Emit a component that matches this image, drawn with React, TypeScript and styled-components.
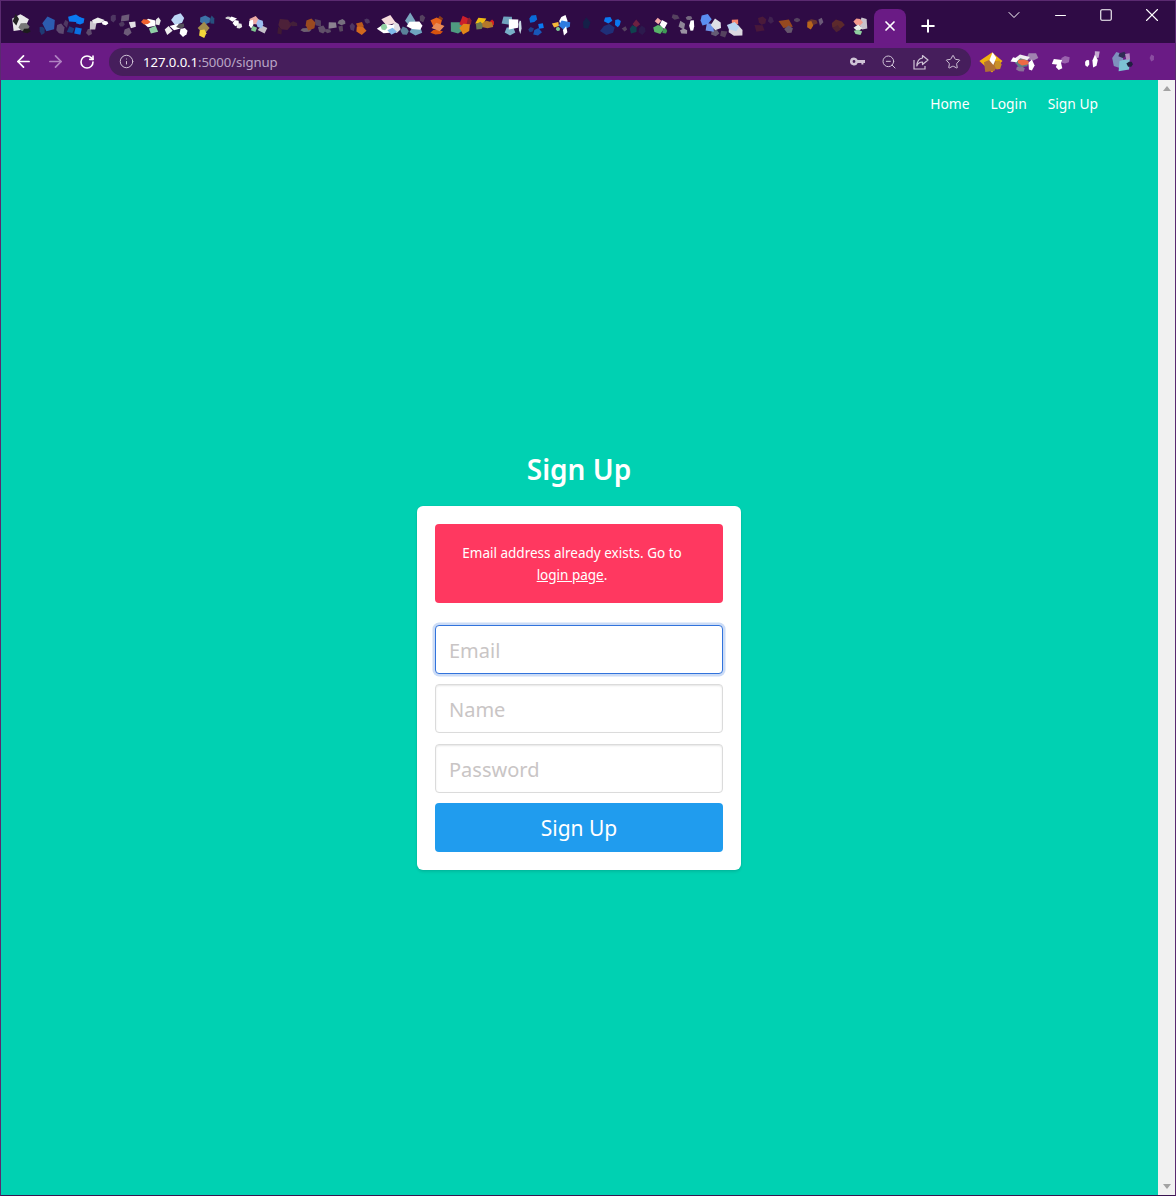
import React from 'react';
import styled, { createGlobalStyle } from 'styled-components';
import { ArrowLeft, ArrowRight, ChevronDown, Info, Minus, Plus, RotateCw, Square, Star, X, ZoomOut } from 'lucide-react';

const GlobalStyle = createGlobalStyle`
  html, body {
    margin: 0;
    padding: 0;
    height: 100%;
    overflow: hidden;
    font-family: "Noto Sans", "Open Sans", sans-serif;
  }
  * { box-sizing: border-box; }
`;

const Frame = styled.div`
  width: 1176px;
  height: 1196px;
  display: flex;
  flex-direction: column;
  border: 1px solid #5a2a70;
  border-bottom-color: #3a1450;
  background: #00d1b2;
`;

const TabStrip = styled.div`
  height: 42px;
  flex: none;
  display: flex;
  align-items: flex-start;
  background: #2f0b45;
`;

const TabBlobs = styled.svg`
  flex: none;
  width: 873px;
  height: 42px;
`;

const ActiveTab = styled.div`
  flex: none;
  width: 32px;
  height: 34px;
  margin-top: 8px;
  display: flex;
  align-items: flex-start;
  justify-content: center;
  padding-top: 9px;
  color: #fff;
  background: #6a1b85;
  border-radius: 8px 8px 0 0;
`;

const NewTab = styled.div`
  flex: none;
  width: 44px;
  height: 34px;
  margin-top: 8px;
  display: flex;
  align-items: flex-start;
  justify-content: center;
  padding-top: 7px;
  color: #fff;
`;

const WindowControls = styled.div`
  margin-left: auto;
  display: flex;
  align-items: center;
  height: 28px;
  color: #fff;
`;

const WindowButton = styled.div`
  width: 46px;
  height: 28px;
  display: flex;
  align-items: center;
  justify-content: center;
`;

const Toolbar = styled.div`
  height: 37px;
  flex: none;
  display: flex;
  align-items: center;
  padding-left: 6px;
  background: #6a1b85;
`;

const NavButton = styled.div<{ $dim?: boolean }>`
  width: 32px;
  height: 28px;
  display: flex;
  align-items: center;
  justify-content: center;
  color: ${(p) => (p.$dim ? '#b083c2' : '#fff')};
`;

const Omnibox = styled.div`
  width: 862px;
  height: 28px;
  margin-left: 6px;
  display: flex;
  align-items: center;
  padding-left: 10px;
  border-radius: 14px;
  background: #461e5c;
  color: #cfc3d6;
`;

const UrlText = styled.div`
  margin-left: 9px;
  font-family: "Noto Sans", sans-serif;
  font-size: 13.2px;
  letter-spacing: -0.1px;
  line-height: 26px;
  color: #b9a5c6;
  white-space: nowrap;
`;

const UrlHost = styled.span`
  color: #fff;
`;

const OmniIcons = styled.div`
  margin-left: auto;
  display: flex;
  align-items: center;
  gap: 16px;
  padding-right: 10px;
`;

const ExtensionBlobs = styled.svg`
  flex: none;
  width: 195px;
  height: 37px;
  margin-left: 5px;
`;

const Viewport = styled.div`
  flex: 1;
  min-height: 0;
  display: flex;
`;

const Page = styled.main`
  flex: 1;
  min-width: 0;
  display: flex;
  flex-direction: column;
  background: #00d1b2;
`;

const TopNav = styled.nav`
  height: 48px;
  flex: none;
  display: flex;
  justify-content: flex-end;
  align-items: center;
  gap: 21px;
  padding: 0 60px 2px 0;
`;

const NavLink = styled.a`
  font-size: 13.8px;
  color: #fff;
`;

const Hero = styled.section`
  flex: 1;
  display: flex;
  flex-direction: column;
  align-items: center;
  padding: 320px 1px 0 0;
`;

const Title = styled.h1`
  margin: 0 0 16px;
  font-size: 28px;
  line-height: 42px;
  font-weight: 600;
  color: #fff;
`;

const Card = styled.div`
  width: 324px;
  padding: 18px;
  background: #fff;
  border-radius: 6px;
  box-shadow: 0 2px 3px rgba(10, 10, 10, 0.1), 0 0 0 1px rgba(10, 10, 10, 0.02);
`;

const Notice = styled.div`
  height: 79px;
  padding: 18px 35px 17px 21px;
  margin-bottom: 22px;
  background: #ff3860;
  border-radius: 4px;
  font-size: 13.5px;
  line-height: 22px;
  text-align: center;
  color: #fff;
`;

const NoticeLink = styled.a`
  color: #fff;
  text-decoration: underline;
`;

const Fields = styled.form`
  display: flex;
  flex-direction: column;
  gap: 10.3px;
`;

const Field = styled.input<{ $focused?: boolean }>`
  width: 100%;
  height: 49px;
  padding: 2px 14px 0 13px;
  font-family: inherit;
  font-size: 20px;
  background: #fff;
  border: 1px solid ${(p) => (p.$focused ? '#3273dc' : '#dbdbdb')};
  border-radius: 4px;
  outline: none;
  box-shadow: ${(p) =>
    p.$focused ? '0 0 0 2.5px rgba(50, 115, 220, 0.25)' : 'inset 0 1px 2px rgba(10, 10, 10, 0.1)'};

  &::placeholder {
    color: #c9c5c5;
    opacity: 1;
  }
`;

const SubmitButton = styled.button`
  height: 49px;
  padding: 2px 0 0;
  font-family: inherit;
  font-size: 21px;
  color: #fff;
  background: #209cee;
  border: none;
  border-radius: 4px;
`;

const Scrollbar = styled.div`
  flex: none;
  width: 17px;
  display: flex;
  flex-direction: column;
  justify-content: space-between;
  align-items: center;
  padding: 6px 0;
  background: #f1f1f1;
`;

const ScrollArrow = styled.div<{ $down?: boolean }>`
  width: 0;
  height: 0;
  border-left: 4.5px solid transparent;
  border-right: 4.5px solid transparent;
  ${(p) => (p.$down ? 'border-top: 5px solid #a3a3a3;' : 'border-bottom: 5px solid #a3a3a3;')}
`;

// blurred favicons: [x, y, rx, ry, colour]
type Shard = [number, number, number, number, string];

const tabShards: Shard[] = [
  [21, 17, 3, 2, '#8a8a8a'], [20, 22, 6, 7, '#e8e8e8'], [24, 27, 5, 4, '#777777'], [16, 20, 2, 5, '#222222'], [27, 31, 3, 2, '#1c1c1c'],
  [60, 29, 3, 4, '#5f4a70'], [66, 23, 2, 3, '#4e3762'], [49, 24, 6, 7, '#2c5cb0'], [42, 30, 2, 3, '#1f3a74'],
  [71, 30, 3, 3, '#1c3f80'], [74, 19, 5, 3, '#0a7af2'], [80, 21, 3, 3, '#0a7af2'], [78, 31, 4, 4, '#0a6fe0'],
  [89, 32, 2, 3, '#5d4a6c'], [113, 18, 2, 3, '#4e3762'], [93, 26, 3, 4, '#c9c4cc'], [98, 21, 5, 2, '#eeeeee'], [105, 23, 3, 2, '#ffffff'],
  [125, 18, 4, 3, '#6c5a78'], [127, 32, 3, 3, '#6d5b79'], [122, 24, 2, 2, '#4f3a60'], [133, 25, 3, 3, '#e2e0e4'],
  [150, 23, 6, 4, '#ffffff'], [146, 22, 3, 2, '#f0622e'], [153, 30, 4, 3, '#8fcfa6'], [158, 21, 2, 3, '#e8e8e8'],
  [178, 19, 5, 4, '#bcd6f5'], [176, 27, 6, 3, '#ffffff'], [181, 26, 3, 2, '#55505a'], [184, 32, 3, 3, '#ffffff'], [168, 30, 3, 3, '#eeeeee'],
  [212, 20, 2, 3, '#27507e'], [205, 20, 5, 4, '#3d73a8'], [204, 28, 5, 4, '#a38d4c'], [203, 33, 3, 3, '#f4d63a'],
  [228, 18, 2, 1, '#cccccc'], [232, 19, 3, 2, '#ffffff'], [236, 23, 3, 3, '#ffffff'], [239, 26, 2, 2, '#e6e6e6'],
  [263, 29, 4, 3, '#c4c0c8'], [255, 21, 4, 3, '#eca9a4'], [260, 24, 3, 3, '#9cbdf0'], [254, 29, 3, 3, '#7fc88f'], [251, 24, 2, 3, '#ffffff'],
  [284, 25, 5, 4, '#4d2139'], [280, 31, 2, 3, '#3f1a33'], [294, 24, 3, 2, '#43203a'],
  [306, 30, 5, 2, '#6d6070'], [318, 23, 3, 3, '#55425f'], [322, 30, 3, 3, '#615069'], [310, 24, 4, 4, '#9a4a20'],
  [333, 25, 4, 3, '#8b8290'], [328, 31, 3, 2, '#5e4e68'], [342, 22, 3, 2, '#77707f'], [341, 29, 2, 3, '#58485f'],
  [352, 27, 2, 3, '#4e3762'], [367, 21, 2, 2, '#4e3762'], [360, 25, 4, 3, '#bb5a1c'], [361, 30, 4, 3, '#d2691e'],
  [396, 27, 3, 4, '#e0dde2'], [388, 21, 5, 4, '#f5dcdc'], [386, 29, 6, 4, '#ffffff'], [384, 27, 3, 3, '#8fcfa0'], [392, 31, 3, 3, '#7fb8ea'],
  [422, 18, 2, 3, '#55425f'], [405, 31, 3, 3, '#5a8199'], [410, 21, 4, 5, '#7ba7bf'], [416, 31, 6, 4, '#6ea4bf'], [415, 26, 6, 3, '#ffffff'],
  [440, 19, 2, 3, '#8a3d1a'], [437, 22, 4, 4, '#e6631c'], [437, 32, 4, 2, '#d6530e'], [438, 27, 6, 4, '#e88a55'],
  [457, 28, 5, 5, '#4f9a80'], [469, 22, 2, 3, '#8a1f33'], [464, 21, 3, 5, '#cc1f2b'], [465, 28, 4, 4, '#e28518'],
  [492, 23, 2, 3, '#d6201f'], [481, 21, 4, 3, '#f0bb12'], [480, 26, 3, 3, '#6b7a56'], [487, 25, 4, 3, '#b3772b'],
  [507, 20, 5, 4, '#6fa3bd'], [510, 31, 5, 4, '#78b0c8'], [520, 26, 1, 5, '#c9d8e2'], [514, 24, 5, 5, '#ffffff'],
  [531, 30, 2, 2, '#203f88'], [533, 19, 3, 3, '#0a6bd8'], [541, 26, 3, 3, '#0a7af2'], [537, 32, 3, 3, '#1857b8'],
  [563, 21, 3, 4, '#ffffff'], [556, 25, 3, 2, '#f5b93a'], [565, 25, 5, 3, '#2f7be0'], [558, 29, 2, 2, '#7cc88f'], [565, 31, 2, 3, '#ffffff'],
  [586, 24, 3, 4, '#152048'],
  [608, 29, 5, 4, '#1f2f78'], [625, 29, 2, 2, '#55425f'], [608, 20, 4, 3, '#0a78f0'], [618, 23, 2, 3, '#0a78f0'],
  [636, 24, 3, 3, '#6d2141'], [633, 29, 3, 3, '#10424f'], [642, 30, 3, 3, '#2c1a4d'],
  [658, 21, 3, 3, '#f4aaaa'], [665, 31, 2, 2, '#3f9a55'], [659, 29, 4, 3, '#57b368'], [663, 24, 3, 3, '#ffffff'],
  [675, 17, 3, 2, '#55425f'], [689, 18, 3, 2, '#75687f'], [682, 25, 3, 3, '#8e8597'], [684, 31, 3, 2, '#9a92a2'], [692, 26, 2, 4, '#ffffff'],
  [723, 34, 3, 3, '#55425f'], [715, 33, 4, 3, '#645a74'], [705, 20, 4, 4, '#5a8ef0'], [710, 27, 4, 4, '#6d93e8'], [717, 25, 4, 4, '#dfdfe6'],
  [736, 31, 6, 4, '#dcd8e0'], [735, 22, 4, 3, '#f2806a'], [733, 27, 5, 3, '#b9d4f0'],
  [762, 21, 3, 3, '#4a1a3a'], [760, 28, 4, 3, '#48183a'], [771, 20, 2, 3, '#3f2250'],
  [797, 20, 3, 2, '#55425f'], [786, 24, 5, 4, '#96491f'], [789, 30, 3, 3, '#66566c'],
  [812, 22, 4, 2, '#6a3430'], [821, 21, 2, 3, '#6c5a78'], [810, 25, 3, 4, '#b8651c'],
  [838, 24, 5, 3, '#5c2a2c'], [837, 29, 3, 3, '#4e2232'],
  [863, 24, 3, 5, '#c9c2cc'], [858, 22, 3, 3, '#f29a8e'], [858, 28, 4, 3, '#e8efe8'], [858, 32, 3, 2, '#8fcfa0'],
];

const extensionShards: Shard[] = [
  [6, 20, 7, 7, '#f0b010'], [5, 24, 5, 5, '#b06f36'], [12, 24, 3, 4, '#c98f28'], [7, 18, 2, 5, '#ffffff'],
  [47, 16, 4, 3, '#a083b0'], [34, 28, 3, 2, '#8b6f9a'], [36, 17, 6, 3, '#f0eef0'], [36, 22, 6, 4, '#5c7f86'], [37, 21, 4, 2, '#ee6a45'], [29, 19, 3, 2, '#ffffff'], [45, 25, 2, 4, '#ffffff'],
  [79, 19, 3, 3, '#9a62ae'], [71, 21, 5, 3, '#ffffff'], [73, 25, 2, 3, '#ffffff'],
  [101, 22, 1.5, 2.5, '#ffffff'], [111, 14, 2, 3, '#c5a9d1'], [109, 21, 2, 4, '#ffffff'],
  [132, 19, 5, 7, '#7e90bd'], [138, 24, 5, 5, '#7cc2d4'], [136, 14, 3, 2, '#2f2b55'], [144, 23, 2, 2, '#1f2040'], [142, 16, 2, 3, '#b08cc0'],
  [166, 17, 2, 3, '#8a4da0'],
];

// uneven polygon around a point, so each shard looks like a scrap of a blurred icon
function shardPoints([x, y, rx, ry]: Shard, index: number, scale: number): string {
  const corners = 4 + (index % 3);
  const points: string[] = [];
  for (let i = 0; i < corners; i++) {
    const angle = (i / corners) * Math.PI * 2 + index;
    const wobble = scale * (0.8 + (((index + 3) * (i + 2) * 7) % 5) / 10);
    points.push(`${(x + Math.cos(angle) * rx * wobble).toFixed(1)},${(y + Math.sin(angle) * ry * wobble).toFixed(1)}`);
  }
  return points.join(' ');
}

function Shards({ items, scale }: { items: Shard[]; scale: number }) {
  return (
    <>
      {items.map((s, i) => (
        <polygon key={i} points={shardPoints(s, i, scale)} fill={s[4]} />
      ))}
    </>
  );
}

function KeyIcon() {
  return (
    <svg width="15" height="15" viewBox="0 0 15 15" fill="#cfc3d6">
      <path fillRule="evenodd" d="M4 3.5a4 4 0 0 1 3.7 2.5H15v3h-1.6v1.6h-2V9H7.7A4 4 0 1 1 4 3.5Zm0 2.6a1.4 1.4 0 1 0 0 2.8 1.4 1.4 0 0 0 0-2.8Z" />
    </svg>
  );
}

function ShareIcon() {
  return (
    <svg width="16" height="16" viewBox="0 0 16 16" fill="none" stroke="#cfc3d6" strokeWidth="1.2">
      <path d="M1 6v9h11v-3" />
      <path d="M9.5 1.5 15 6l-5.5 4.5V8C7 8 5 9 3.8 12 4 8 6 4.5 9.5 4Z" strokeLinejoin="round" />
    </svg>
  );
}

export default function App(): React.ReactElement {
  return (
    <Frame>
      <GlobalStyle />
      <TabStrip>
        <TabBlobs viewBox="1 1 873 42">
          <Shards items={tabShards} scale={1.4} />
        </TabBlobs>
        <ActiveTab>
          <X size={16} strokeWidth={1.7} absoluteStrokeWidth />
        </ActiveTab>
        <NewTab>
          <Plus size={20} strokeWidth={2} absoluteStrokeWidth />
        </NewTab>
        <WindowControls>
          <WindowButton>
            <ChevronDown size={20} strokeWidth={1} absoluteStrokeWidth />
          </WindowButton>
          <WindowButton>
            <Minus size={17} strokeWidth={1.1} absoluteStrokeWidth />
          </WindowButton>
          <WindowButton>
            <Square size={14} strokeWidth={1.1} absoluteStrokeWidth />
          </WindowButton>
          <WindowButton>
            <X size={22} strokeWidth={1.1} absoluteStrokeWidth />
          </WindowButton>
        </WindowControls>
      </TabStrip>
      <Toolbar>
        <NavButton>
          <ArrowLeft size={19} strokeWidth={2.2} />
        </NavButton>
        <NavButton $dim>
          <ArrowRight size={19} strokeWidth={2.2} />
        </NavButton>
        <NavButton>
          <RotateCw size={16} strokeWidth={2.4} />
        </NavButton>
        <Omnibox>
          <Info size={15} strokeWidth={1.6} />
          <UrlText>
            <UrlHost>127.0.0.1</UrlHost>:5000/signup
          </UrlText>
          <OmniIcons>
            <KeyIcon />
            <ZoomOut size={16} strokeWidth={1.5} />
            <ShareIcon />
            <Star size={16} strokeWidth={1.5} />
          </OmniIcons>
        </Omnibox>
        <ExtensionBlobs viewBox="-10 2 195 37">
          <Shards items={extensionShards} scale={1.5} />
        </ExtensionBlobs>
      </Toolbar>
      <Viewport>
        <Page>
          <TopNav>
            <NavLink>Home</NavLink>
            <NavLink>Login</NavLink>
            <NavLink>Sign Up</NavLink>
          </TopNav>
          <Hero>
            <Title>Sign Up</Title>
            <Card>
              <Notice>
                Email address already exists. Go to <NoticeLink>login page</NoticeLink>.
              </Notice>
              <Fields>
                <Field $focused placeholder="Email" />
                <Field placeholder="Name" />
                <Field placeholder="Password" />
                <SubmitButton type="button">Sign Up</SubmitButton>
              </Fields>
            </Card>
          </Hero>
        </Page>
        <Scrollbar>
          <ScrollArrow />
          <ScrollArrow $down />
        </Scrollbar>
      </Viewport>
    </Frame>
  );
}
